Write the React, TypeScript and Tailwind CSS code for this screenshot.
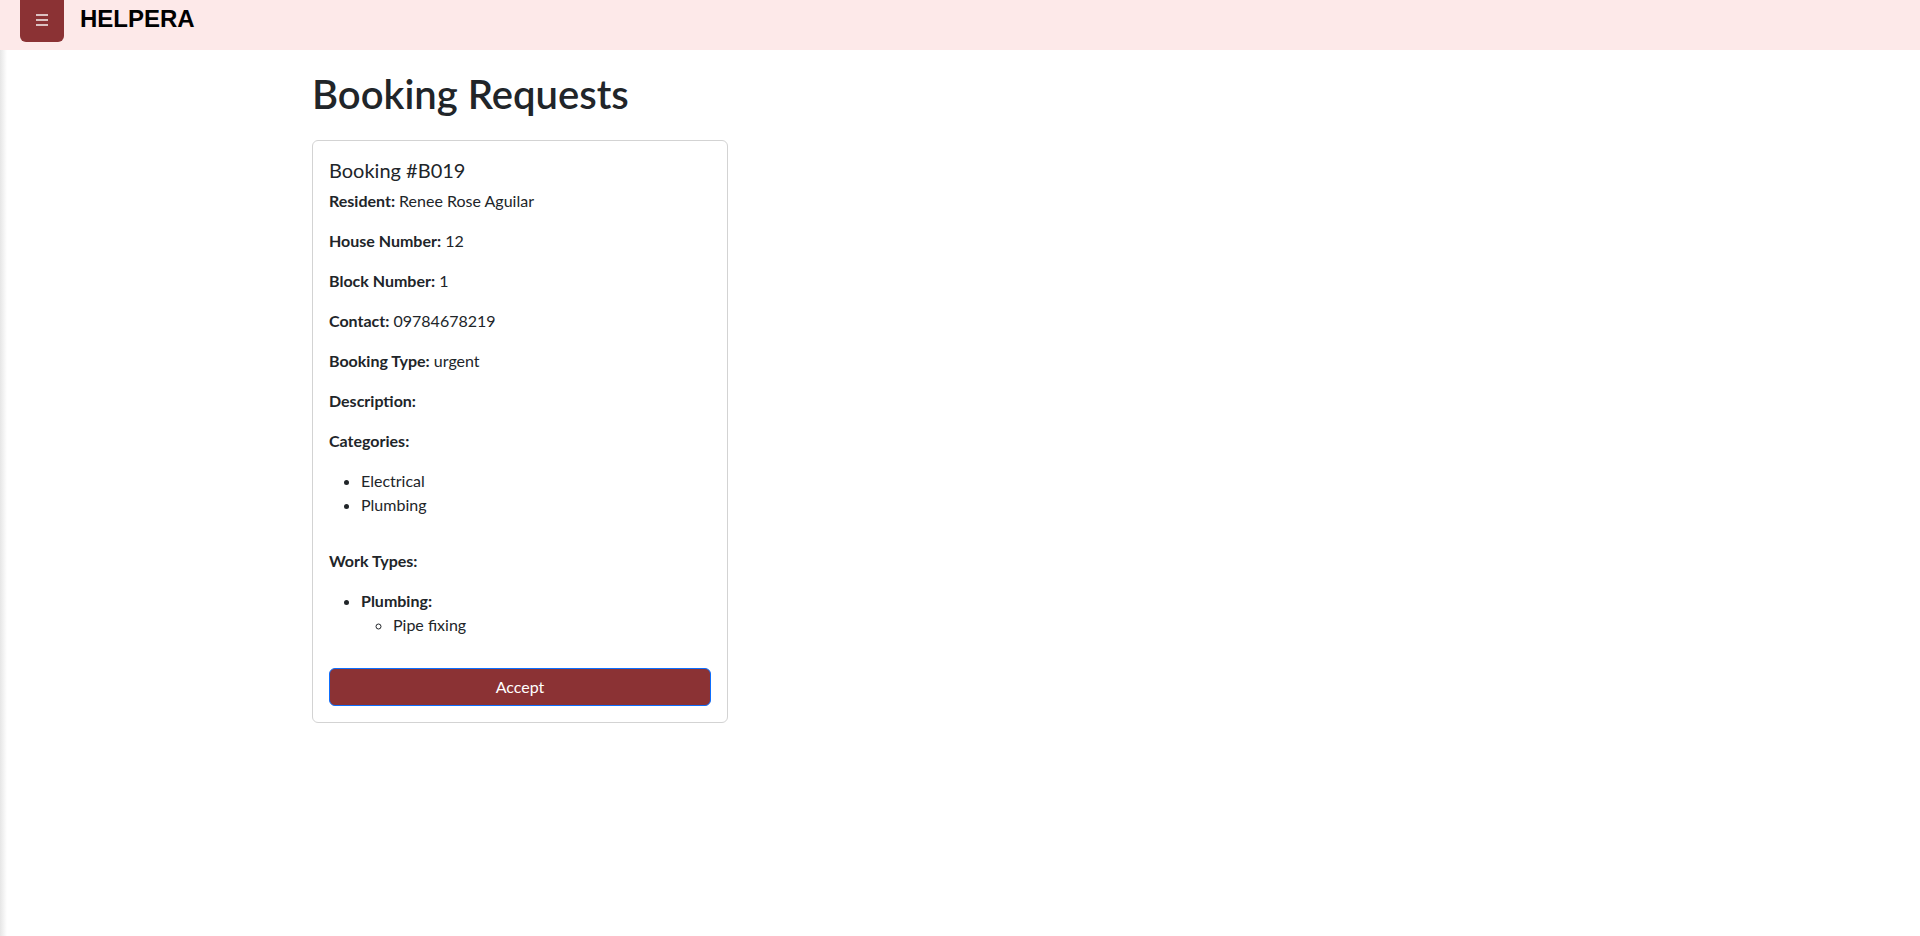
import React from "react";

function App() {
  // single booking card, same data as the screenshot
  const booking = {
    id: "B019",
    resident: "Renee Rose Aguilar",
    houseNumber: "12",
    blockNumber: "1",
    contact: "09784678219",
    bookingType: "urgent",
    description: "",
    categories: ["Electrical", "Plumbing"],
    workTypes: [{ category: "Plumbing", items: ["Pipe fixing"] }],
  };

  const fields = [
    { label: "Resident:", value: booking.resident },
    { label: "House Number:", value: booking.houseNumber },
    { label: "Block Number:", value: booking.blockNumber },
    { label: "Contact:", value: booking.contact },
    { label: "Booking Type:", value: booking.bookingType },
    { label: "Description:", value: booking.description },
  ];

  return (
    <div className="relative min-h-screen bg-white text-[#212529] font-['Lato','Noto_Sans',sans-serif]">
      {/* top bar */}
      <header className="flex h-[50px] items-start gap-[16px] bg-[#fde9e9] px-[20px]">
        <button className="flex h-[42px] w-[44px] items-center justify-center rounded-b-[6px] bg-[#8b3234]">
          <svg width="14" height="12" viewBox="0 0 14 12" className="mt-[-2px]">
            <line x1="1" y1="1" x2="13" y2="1" stroke="white" strokeWidth="1.4" />
            <line x1="1" y1="6" x2="13" y2="6" stroke="white" strokeWidth="1.4" />
            <line x1="1" y1="11" x2="13" y2="11" stroke="white" strokeWidth="1.4" />
          </svg>
        </button>
        <span className="mt-[5px] font-['Liberation_Sans',Arial,sans-serif] text-[24px] font-bold leading-[28px] text-black">
          HELPERA
        </span>
      </header>

      {/* sidebar edge shadow */}
      <div className="absolute bottom-0 left-0 top-[50px] w-[7px] bg-gradient-to-r from-[#e6e6e6] to-transparent" />

      <main className="mx-auto w-[1320px] px-[12px] pt-[20px]">
        <h1 className="mb-[22px] text-[40px] font-semibold leading-[48px]">Booking Requests</h1>

        <div className="w-[416px] rounded-[6px] border border-[#d3d3d3] px-[16px] pb-[16px] pt-[17px]">
          <h5 className="mb-[7px] text-[20px] leading-[24px]">Booking #{booking.id}</h5>

          {fields.map((f, i) => (
            <p key={i} className="mb-[16px] text-[16px] leading-[24px]">
              <strong className="font-bold">{f.label}</strong> {f.value}
            </p>
          ))}

          <p className="mb-[16px] text-[16px] leading-[24px]">
            <strong className="font-bold">Categories:</strong>
          </p>
          <ul className="mb-[32px] list-disc pl-[32px] text-[16px] leading-[24px]">
            {booking.categories.map((c, i) => (
              <li key={i}>{c}</li>
            ))}
          </ul>

          <p className="mb-[16px] text-[16px] leading-[24px]">
            <strong className="font-bold">Work Types:</strong>
          </p>
          <ul className="mb-[31px] list-disc pl-[32px] text-[16px] leading-[24px]">
            {booking.workTypes.map((w, i) => (
              <li key={i}>
                <strong className="font-bold">{w.category}:</strong>
                <ul className="list-[circle] pl-[32px]">
                  {w.items.map((it, j) => (
                    <li key={j}>{it}</li>
                  ))}
                </ul>
              </li>
            ))}
          </ul>

          <button className="h-[38px] w-full rounded-[6px] border border-[#0d6efd] bg-[#8b3234] text-[16px] text-white">
            Accept
          </button>
        </div>
      </main>
    </div>
  );
}

export default App;
